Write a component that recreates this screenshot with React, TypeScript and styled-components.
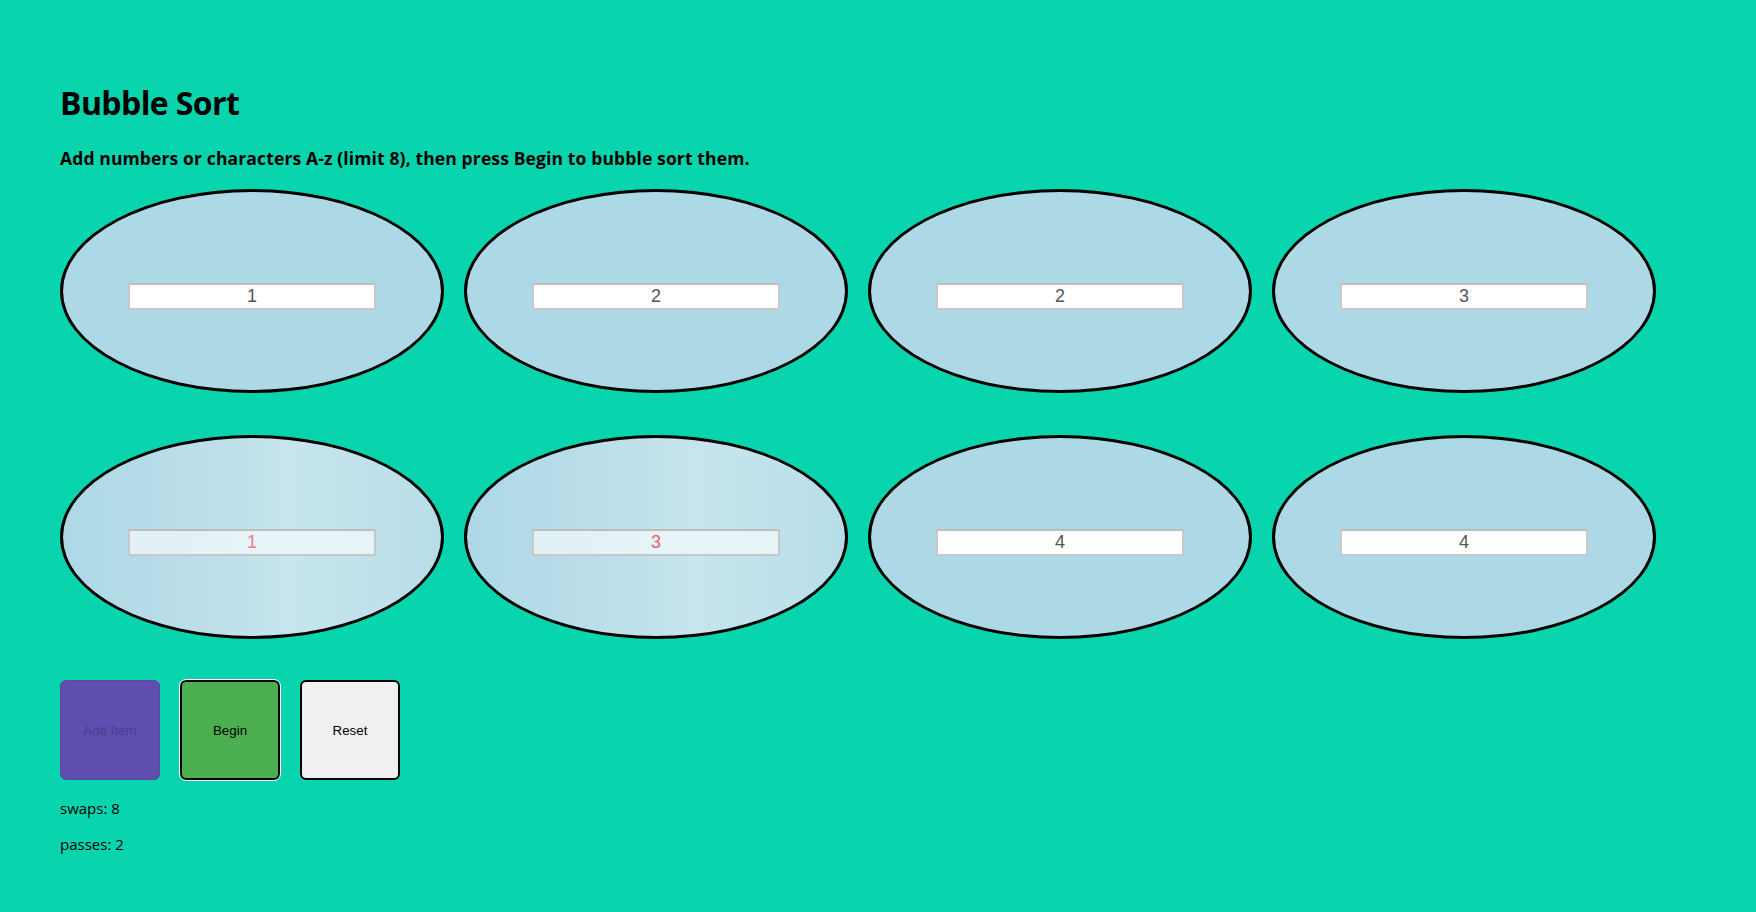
import React from "react";
import styled, { createGlobalStyle } from "styled-components";

const Global = createGlobalStyle`
  html, body {
    margin: 0;
    padding: 0;
    background: #08d4ae;
  }
  body {
    font-family: "Open Sans", "Noto Sans", sans-serif;
    color: #000;
  }
`;

const Page = styled.main`
  padding: 83px 0 40px 60px;
  min-height: 912px;
  box-sizing: border-box;
`;

const Title = styled.h1`
  margin: 0;
  font-size: 32px;
  line-height: 40px;
  font-weight: 700;
  letter-spacing: -0.6px;
`;

const Instructions = styled.p`
  margin: 24px 0 20px;
  font-size: 17.5px;
  line-height: 22px;
  font-weight: 700;
  letter-spacing: 0.13px;
`;

const BubbleGrid = styled.div`
  display: flex;
  flex-wrap: wrap;
  column-gap: 20px;
  row-gap: 42px;
  width: 1596px;
`;

const Bubble = styled.div<{ $active?: boolean }>`
  box-sizing: border-box;
  width: 384px;
  height: 204px;
  border: 3px solid #000;
  border-radius: 50%;
  background: ${(p) =>
    p.$active
      ? "linear-gradient(90deg, #add8e6 0%, #b9dde9 30%, #c6e5ee 60%, #bfe1eb 85%, #b6dde8 100%)"
      : "#add8e6"};
  display: flex;
  align-items: center;
  justify-content: center;
`;

const ValueInput = styled.input<{ $active?: boolean; $tone?: string }>`
  box-sizing: border-box;
  width: 248px;
  height: 27px;
  margin-top: 11px;
  border: 2px solid #c8c8c8;
  border-top-color: #bdbdbd;
  background: ${(p) => (p.$active ? "rgba(255,255,255,0.6)" : "#fff")};
  color: ${(p) => p.$tone || "#555"};
  font-family: "Liberation Sans", Arial, sans-serif;
  font-size: 18px;
  text-align: center;
  padding: 0;
  outline: none;
`;

const Controls = styled.div`
  display: flex;
  gap: 20px;
  margin-top: 41px;
`;

const ActionButton = styled.button<{ $variant: "add" | "begin" | "reset" }>`
  box-sizing: border-box;
  width: 100px;
  height: 100px;
  border-radius: 6px;
  font-family: "Liberation Sans", Arial, sans-serif;
  font-size: 13.33px;
  padding: 0;
  cursor: pointer;
  background: ${(p) =>
    p.$variant === "add" ? "#5f4daf" : p.$variant === "begin" ? "#4caf50" : "#f0f0f0"};
  border: ${(p) => (p.$variant === "add" ? "1px solid #5a48a0" : "2px solid #000")};
  color: ${(p) => (p.$variant === "add" ? "#4a3c8f" : "#000")};
  outline: ${(p) => (p.$variant === "begin" ? "1px solid #fff" : "none")};
  outline-offset: 0;
`;

const Stat = styled.p<{ $first?: boolean }>`
  margin: ${(p) => (p.$first ? "18px 0 0" : "16px 0 0")};
  font-size: 15px;
  line-height: 20px;
`;

const items: { v: string; active?: boolean; tone?: string }[] = [
  { v: "1" },
  { v: "2" },
  { v: "2" },
  { v: "3" },
  { v: "1", active: true, tone: "#ec7c86" },
  { v: "3", active: true, tone: "#e6606c" },
  { v: "4" },
  { v: "4" },
];

export default function App() {
  return (
    <>
      <Global />
      <Page>
        <Title>Bubble Sort</Title>
        <Instructions>
          Add numbers or characters A-z (limit 8), then press Begin to bubble sort them.
        </Instructions>
        <BubbleGrid>
          {items.map((it, i) => (
            <Bubble key={i} $active={it.active}>
              <ValueInput
                readOnly
                value={it.v}
                $active={it.active}
                $tone={it.tone}
              />
            </Bubble>
          ))}
        </BubbleGrid>
        <Controls>
          <ActionButton $variant="add" disabled>
            Add Item
          </ActionButton>
          <ActionButton $variant="begin">Begin</ActionButton>
          <ActionButton $variant="reset">Reset</ActionButton>
        </Controls>
        <Stat $first>swaps: 8</Stat>
        <Stat>passes: 2</Stat>
      </Page>
    </>
  );
}
